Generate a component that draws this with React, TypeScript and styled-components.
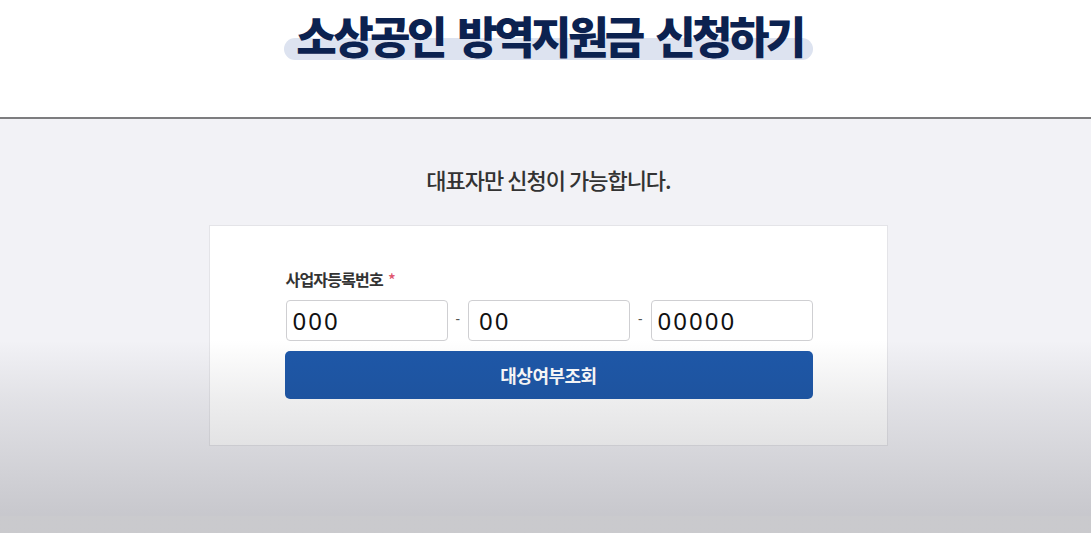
import React from "react";
import styled, { createGlobalStyle } from "styled-components";

const GlobalStyle = createGlobalStyle`
  html, body { margin: 0; padding: 0; background: #ffffff; }
  body { font-family: "Noto Sans CJK KR", "Noto Sans", sans-serif; }
  * { box-sizing: border-box; }
`;

const Page = styled.div`
  position: relative;
  min-height: 533px;
  display: flex;
  flex-direction: column;
  overflow: hidden;
`;

const Header = styled.header`
  height: 119px;
  background: #ffffff;
  border-bottom: 2px solid #7d7d7f;
  display: flex;
  justify-content: center;
  align-items: flex-start;
  padding-top: 3px;
  padding-left: 6px;
`;

const TitleWrap = styled.h1`
  position: relative;
  margin: 0;
  padding: 0 10px 0 12px;
  font-family: "Noto Sans CJK KR", sans-serif;
  font-weight: 900;
  font-size: 44px;
  line-height: 64px;
  letter-spacing: -3.6px;
  word-spacing: 7px;
  color: #0c2250;
  &::before {
    content: "";
    position: absolute;
    left: 0;
    right: 0;
    top: 35px;
    height: 22px;
    border-radius: 11px;
    background: #dde3f0;
    z-index: 0;
  }
`;

const TitleText = styled.span`
  position: relative;
  z-index: 1;
`;

const Main = styled.main`
  flex: 1;
  background: #f2f2f6;
  display: flex;
  flex-direction: column;
  align-items: center;
  padding-top: 44px;
  padding-left: 5px;
`;

const Subtitle = styled.p`
  margin: 0 0 30px 1px;
  font-size: 22px;
  line-height: 32px;
  font-weight: 500;
  letter-spacing: -1px;
  color: #333333;
`;

const Card = styled.section`
  width: 679px;
  background: #ffffff;
  border: 1px solid #e4e4e8;
  padding: 41px 74px 46px 76px;
`;

const Label = styled.div`
  font-size: 16px;
  font-weight: 700;
  line-height: 24px;
  letter-spacing: -0.8px;
  color: #333333;
  margin-bottom: 9px;
`;

const Required = styled.span`
  color: #e0566f;
  margin-left: 5px;
  font-weight: 500;
`;

const Row = styled.div`
  display: flex;
  align-items: center;
  margin-bottom: 10px;
`;

const NumInput = styled.input<{ $pad?: number }>`
  width: 162px;
  height: 41px;
  border: 1px solid #cfcfd2;
  border-radius: 4px;
  background: #ffffff;
  padding: 0 ${(p) => p.$pad ?? 6}px;
  font-family: "Noto Sans", sans-serif;
  font-size: 24px;
  letter-spacing: 2px;
  color: #111111;
  outline: none;
`;

const Dash = styled.span`
  width: 22px;
  text-align: center;
  font-family: "Noto Sans", sans-serif;
  font-size: 14px;
  color: #555555;
  margin-top: -4px;
`;

const SubmitButton = styled.button`
  display: block;
  width: 528px;
  height: 48px;
  border: none;
  border-radius: 5px;
  background: #1e58a9;
  color: #ffffff;
  font-family: "Noto Sans CJK KR", sans-serif;
  font-size: 18px;
  font-weight: 700;
  letter-spacing: -0.5px;
  margin-left: -1px;
  cursor: pointer;
`;

const Shade = styled.div`
  position: absolute;
  left: 0;
  right: 0;
  top: 340px;
  bottom: 0;
  pointer-events: none;
  background: linear-gradient(
    to bottom,
    rgba(30, 30, 40, 0) 0px,
    rgba(30, 30, 40, 0.08) 60px,
    rgba(30, 30, 40, 0.2) 176px,
    rgba(20, 20, 20, 0.18) 176px,
    rgba(20, 20, 20, 0.18) 100%
  );
`;

export default function App() {
  return (
    <Page>
      <GlobalStyle />
      <Header>
        <TitleWrap>
          <TitleText>소상공인 방역지원금 신청하기</TitleText>
        </TitleWrap>
      </Header>
      <Main>
        <Subtitle>대표자만 신청이 가능합니다.</Subtitle>
        <Card>
          <Label>
            사업자등록번호<Required>*</Required>
          </Label>
          <Row>
            <NumInput readOnly defaultValue="000" />
            <Dash>-</Dash>
            <NumInput readOnly defaultValue="00" $pad={10} />
            <Dash>-</Dash>
            <NumInput readOnly defaultValue="00000" />
          </Row>
          <SubmitButton type="button">대상여부조회</SubmitButton>
        </Card>
      </Main>
      <Shade />
    </Page>
  );
}
